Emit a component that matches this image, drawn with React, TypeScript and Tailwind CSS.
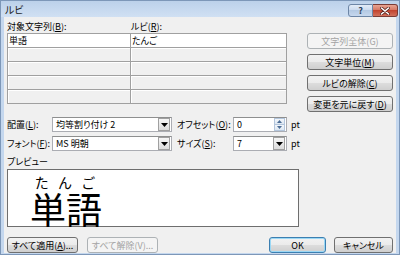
import React from 'react';
import clsx from 'clsx';

const ui = "font-['Noto_Sans_CJK_JP','Noto_Sans',sans-serif] [font-feature-settings:'palt']";

function U({ children }: { children: React.ReactNode }) {
  return <span className="underline underline-offset-1">{children}</span>;
}

function Btn({
  children,
  disabled,
  focused,
  className,
}: {
  children: React.ReactNode;
  disabled?: boolean;
  focused?: boolean;
  className?: string;
}) {
  return (
    <div
      className={clsx(
        'flex h-[16px] items-center justify-center rounded-[3px] border text-[9px] leading-none',
        disabled
          ? 'border-[#adb2b5] bg-[#f4f4f4] text-[#a3a3a3]'
          : focused
            ? 'border-[#3c7fb1] bg-[linear-gradient(#f2f2f2_0%,#ebebeb_50%,#dddddd_50%,#cfcfcf_100%)] text-black shadow-[inset_0_0_0_1px_#9bd8f5]'
            : 'border-[#707070] bg-[linear-gradient(#f2f2f2_0%,#ebebeb_50%,#dddddd_50%,#cfcfcf_100%)] text-black',
        className,
      )}
    >
      {children}
    </div>
  );
}

function DownArrow() {
  return (
    <svg width="7" height="4" viewBox="0 0 7 4">
      <path d="M0 0h7L3.5 4z" fill="#000" />
    </svg>
  );
}

function Combo({ value, className }: { value: string; className?: string }) {
  return (
    <div
      className={clsx(
        'flex h-[15px] items-center border border-[#abadb3] border-t-[#8e8f8f] bg-white',
        className,
      )}
    >
      <span className="flex-1 pl-[3px] text-[9px] leading-none">{value}</span>
      <div className="mr-px flex h-[13px] w-[12px] items-center justify-center border border-[#a0a0a0] bg-[linear-gradient(#f6f6f6,#dcdcdc)]">
        <DownArrow />
      </div>
    </div>
  );
}

function Spinner({ value }: { value: string }) {
  return (
    <div className="flex h-[15px] w-[54px] items-center border border-[#abadb3] border-t-[#8e8f8f] bg-white">
      <span className="flex-1 pl-[3px] text-[9px] leading-none">{value}</span>
      <div className="mr-px flex h-[13px] w-[11px] flex-col">
        <div className="flex flex-1 items-center justify-center border border-[#b4c6dc] bg-[linear-gradient(#f3f7fb,#dde7f2)]">
          <svg width="5" height="3" viewBox="0 0 5 3">
            <path d="M0 3h5L2.5 0z" fill="#4c6d96" />
          </svg>
        </div>
        <div className="flex flex-1 items-center justify-center border border-t-0 border-[#b4c6dc] bg-[linear-gradient(#f3f7fb,#dde7f2)]">
          <svg width="5" height="3" viewBox="0 0 5 3">
            <path d="M0 0h5L2.5 3z" fill="#4c6d96" />
          </svg>
        </div>
      </div>
    </div>
  );
}

const rows = [
  { base: '単語', ruby: 'たんご' },
  { base: '', ruby: '' },
  { base: '', ruby: '' },
  { base: '', ruby: '' },
  { base: '', ruby: '' },
];

export default function App() {
  return (
    <div className={clsx('flex h-[255px] w-[400px] flex-col border border-[#7d97b8] bg-[#c4d7ee] text-black', ui)}>
      {/* title bar */}
      <div className="flex h-[19px] items-start justify-between bg-[linear-gradient(#bcd1ea,#d0e0f3)] pl-[4px] pr-[1px]">
        <span className="pt-[4px] text-[10px] leading-none text-[#1b1b1b]">ルビ</span>
        <div className="flex pt-[3px]">
          <div className="flex h-[13px] w-[25px] items-center justify-center rounded-l-[3px] border border-[#6d86a6] bg-[linear-gradient(#e3ecf7_0%,#c9d9ee_50%,#b4c9e3_50%,#c7d8ee_100%)] text-[9px] font-bold leading-none text-[#2c3e5a]">
            ?
          </div>
          <div className="flex h-[13px] w-[25px] items-center justify-center rounded-r-[3px] border border-l-0 border-[#7a3b35] bg-[linear-gradient(#e8a493_0%,#d4735f_50%,#c2442f_50%,#d2715c_100%)]">
            <svg width="10" height="8" viewBox="0 0 10 8">
              <path d="M1.5 1l7 6M8.5 1l-7 6" stroke="#5a2620" strokeWidth="3" strokeLinecap="round" />
              <path d="M1.5 1l7 6M8.5 1l-7 6" stroke="#fff" strokeWidth="1.6" strokeLinecap="round" />
            </svg>
          </div>
        </div>
      </div>

      {/* client */}
      <div className="mx-[3px] mb-[2px] flex flex-1 flex-col bg-[#f0f0f0] pl-[3px] pr-[3px] pt-[3px]">
        <div className="flex">
          <div className="flex w-[280px] flex-col">
            <div className="flex h-[13px] items-center text-[9px] leading-none">
              <span className="w-[124px]">
                対象文字列(<U>B</U>):
              </span>
              <span>
                ルビ(<U>R</U>):
              </span>
            </div>
            <div className="border-l border-t border-[#a0a0a0]">
              {rows.map((r, i) => (
                <div key={i} className="flex h-[14px]">
                  <div
                    className={clsx(
                      'flex w-[123px] items-center border-b border-r border-[#a0a0a0] pl-[1px] text-[9px] leading-none',
                      i === 0 ? 'bg-white' : 'bg-[#f0f0f0] shadow-[inset_1px_1px_0_#fff]',
                    )}
                  >
                    {r.base}
                  </div>
                  <div
                    className={clsx(
                      'flex flex-1 items-center border-b border-r border-[#a0a0a0] pl-[1px] text-[9px] leading-none',
                      i === 0 ? 'bg-white' : 'bg-[#f0f0f0] shadow-[inset_1px_1px_0_#fff]',
                    )}
                  >
                    {r.ruby}
                  </div>
                </div>
              ))}
            </div>
          </div>
          <div className="ml-[20px] flex w-[86px] flex-col gap-[5px] pt-[13px]">
            <Btn disabled>文字列全体(G)</Btn>
            <Btn>
              文字単位(<U>M</U>)
            </Btn>
            <Btn>
              ルビの解除(<U>C</U>)
            </Btn>
            <Btn>
              変更を元に戻す(<U>D</U>)
            </Btn>
          </div>
        </div>

        {/* option rows */}
        <div className="mt-[5px] flex flex-col gap-[4px] text-[9px] leading-none">
          <div className="flex items-center">
            <span className="w-[45px]">
              配置(<U>L</U>):
            </span>
            <Combo value="均等割り付け 2" className="w-[120px]" />
            <span className="ml-[5px] w-[56px]">
              オフセット(<U>O</U>):
            </span>
            <Spinner value="0" />
            <span className="ml-[4px]">pt</span>
          </div>
          <div className="flex items-center">
            <span className="w-[45px]">
              フォント(<U>F</U>):
            </span>
            <Combo value="MS 明朝" className="w-[120px]" />
            <span className="ml-[5px] w-[56px]">
              サイズ(<U>S</U>):
            </span>
            <Combo value="7" className="w-[54px]" />
            <span className="ml-[4px]">pt</span>
          </div>
        </div>

        {/* preview */}
        <div className="mt-[4px] h-[13px] text-[9px] leading-[13px]">プレビュー</div>
        <div className="mt-px flex h-[58px] w-[292px] flex-col border border-[#6e6e6e] bg-white pl-[22px] pt-[4px]">
          <div className="flex w-[70px] justify-around text-[14px] leading-[16px] [font-feature-settings:normal]">
            <span>た</span>
            <span>ん</span>
            <span>ご</span>
          </div>
          <div className="text-[36px] leading-[36px] [font-feature-settings:normal]">単語</div>
        </div>

        {/* bottom buttons */}
        <div className="mt-[10px] flex items-center">
          <Btn className="w-[71px]">
            すべて適用(<U>A</U>)...
          </Btn>
          <Btn disabled className="ml-[9px] w-[71px]">
            すべて解除(V)...
          </Btn>
          <div className="flex-1" />
          <Btn focused className="w-[57px]">
            OK
          </Btn>
          <Btn className="ml-[8px] w-[59px]">キャンセル</Btn>
        </div>
      </div>
    </div>
  );
}
